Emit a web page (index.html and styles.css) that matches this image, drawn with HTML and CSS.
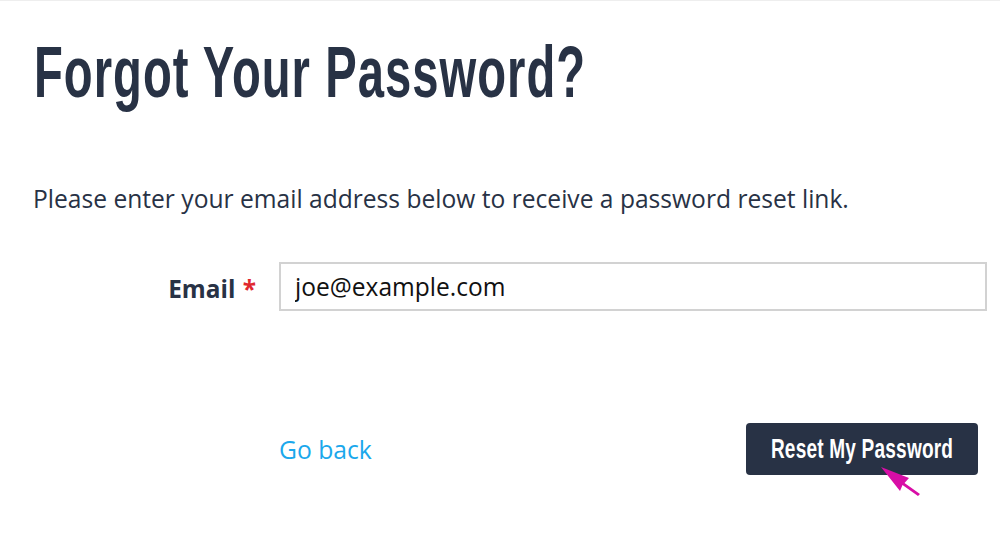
FILE: index.html
```html
<!DOCTYPE html>
<html>
<head>
<meta charset="utf-8">
<title>Forgot Your Password?</title>
<link rel="stylesheet" href="styles.css">
</head>
<body>
<div class="page">
    <h1 class="title"><span class="title-txt">Forgot Your Password?</span></h1>
    <p class="intro">Please enter your email address below to receive a password reset link.</p>
    <div class="field">
        <label class="field-label" for="email">Email <em>*</em></label>
        <input class="field-input" id="email" type="text" value="joe@example.com">
    </div>
    <div class="actions">
        <a class="back" href="#">Go back</a>
        <div class="btn"><span class="btn-txt">Reset My Password</span>
            <svg class="arrow" width="44" height="34" viewBox="0 0 44 34"><path d="M0 0L28 11L23.500 16L39 27L37 29L21.500 18L19 24Z" fill="#d80ea6"/></svg>
        </div>
    </div>
</div>
</body>
</html>
```

FILE: styles.css
```css
html,body,h1,p{margin:0;padding:0;}
body{background:#fff;color:#283245;font-family:"Open Sans","Noto Sans",sans-serif;overflow:hidden;}
a{text-decoration:none;}

.page{height:544px;box-sizing:border-box;padding:0 13px 0 33px;border-top:1px solid #eee;}
.title{height:116px;padding:30px 0 0 1px;box-sizing:border-box;font:bold 72px/82px "Liberation Sans",sans-serif;letter-spacing:1.6px;white-space:nowrap;}
.title-txt{display:inline-block;transform:scaleX(.655);transform-origin:0 0;}
.intro{margin-top:64px;font-size:24.6px;line-height:36px;white-space:nowrap;}

.field{display:flex;align-items:center;margin-top:45px;}
.field-label{width:246px;padding:3px 23px 0 0;box-sizing:border-box;text-align:right;font-size:24.4px;font-weight:bold;}
.field-label em{font-style:normal;color:#e0282e;margin-left:1px;}
.field-input{flex:1;height:49px;box-sizing:border-box;border:2px solid #d2d2d2;padding:0 14px;font:24.55px "Open Sans",sans-serif;color:#111;outline:0;}

.actions{display:flex;align-items:center;justify-content:space-between;margin:112px 9px 0 246px;}
.back{font-size:24.7px;line-height:36px;padding-top:1px;color:#1ba8ec;}
.btn{position:relative;display:flex;justify-content:center;width:232px;height:52px;background:#283245;border-radius:4px;color:#fff;font:bold 28px/52px "Liberation Sans",sans-serif;letter-spacing:.3px;white-space:nowrap;}
.btn-txt{transform:scaleX(.68);}
.arrow{position:absolute;left:135px;top:44px;}
```
